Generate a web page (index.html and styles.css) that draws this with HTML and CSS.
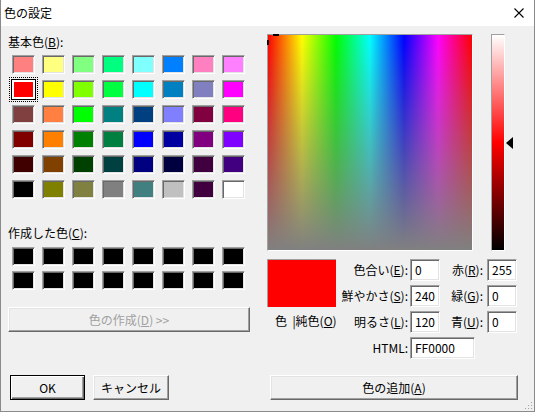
FILE: index.html
```html
<!DOCTYPE html>
<html lang="ja">
<head>
<meta charset="utf-8">
<title>色の設定</title>
<link rel="stylesheet" href="styles.css">
</head>
<body>
<div class="window">
  <div class="titlebar">
    <span class="title">色の設定</span>
    <svg class="close" width="10" height="10" viewBox="0 0 10 10"><path d="M0.5 0.5 L9.5 9.5 M9.5 0.5 L0.5 9.5" stroke="#000" stroke-width="1.1" fill="none"/></svg>
  </div>
  <div class="main">
    <div class="left">
      <div class="label">基本色(<u>B</u>):</div>
      <div class="grid basic">
        <div class="sw" style="background:#ff8080"></div>
        <div class="sw" style="background:#ffff80"></div>
        <div class="sw" style="background:#80ff80"></div>
        <div class="sw" style="background:#00ff80"></div>
        <div class="sw" style="background:#80ffff"></div>
        <div class="sw" style="background:#0080ff"></div>
        <div class="sw" style="background:#ff80c0"></div>
        <div class="sw" style="background:#ff80ff"></div>

        <div class="sw sel" style="background:#ff0000"></div>
        <div class="sw" style="background:#ffff00"></div>
        <div class="sw" style="background:#80ff00"></div>
        <div class="sw" style="background:#00ff40"></div>
        <div class="sw" style="background:#00ffff"></div>
        <div class="sw" style="background:#0080c0"></div>
        <div class="sw" style="background:#8080c0"></div>
        <div class="sw" style="background:#ff00ff"></div>

        <div class="sw" style="background:#804040"></div>
        <div class="sw" style="background:#ff8040"></div>
        <div class="sw" style="background:#00ff00"></div>
        <div class="sw" style="background:#008080"></div>
        <div class="sw" style="background:#004080"></div>
        <div class="sw" style="background:#8080ff"></div>
        <div class="sw" style="background:#800040"></div>
        <div class="sw" style="background:#ff0080"></div>

        <div class="sw" style="background:#800000"></div>
        <div class="sw" style="background:#ff8000"></div>
        <div class="sw" style="background:#008000"></div>
        <div class="sw" style="background:#008040"></div>
        <div class="sw" style="background:#0000ff"></div>
        <div class="sw" style="background:#0000a0"></div>
        <div class="sw" style="background:#800080"></div>
        <div class="sw" style="background:#8000ff"></div>

        <div class="sw" style="background:#400000"></div>
        <div class="sw" style="background:#804000"></div>
        <div class="sw" style="background:#004000"></div>
        <div class="sw" style="background:#004040"></div>
        <div class="sw" style="background:#000080"></div>
        <div class="sw" style="background:#000040"></div>
        <div class="sw" style="background:#400040"></div>
        <div class="sw" style="background:#400080"></div>

        <div class="sw" style="background:#000000"></div>
        <div class="sw" style="background:#808000"></div>
        <div class="sw" style="background:#808040"></div>
        <div class="sw" style="background:#808080"></div>
        <div class="sw" style="background:#408080"></div>
        <div class="sw" style="background:#c0c0c0"></div>
        <div class="sw" style="background:#400040"></div>
        <div class="sw" style="background:#ffffff"></div>
      </div>
      <div class="label custom-label">作成した色(<u>C</u>):</div>
      <div class="grid custom">
        <div class="sw black"></div><div class="sw black"></div><div class="sw black"></div><div class="sw black"></div>
        <div class="sw black"></div><div class="sw black"></div><div class="sw black"></div><div class="sw black"></div>
        <div class="sw black"></div><div class="sw black"></div><div class="sw black"></div><div class="sw black"></div>
        <div class="sw black"></div><div class="sw black"></div><div class="sw black"></div><div class="sw black"></div>
      </div>
      <div class="btn wide disabled">色の作成(<u>D</u>) &gt;&gt;</div>
    </div>
    <div class="right">
      <div class="picker">
        <div class="spectrum">
          <span class="cross-h"></span>
          <span class="cross-v"></span>
        </div>
        <div class="lum"></div>
        <div class="arrow"></div>
      </div>
      <div class="info">
        <div class="preview-col">
          <div class="preview"></div>
          <div class="preview-label">色&nbsp;&nbsp;|純色(<u>O</u>)</div>
        </div>
        <div class="fields">
          <div class="flabel">色合い(<u>E</u>):</div>
          <div class="field">0</div>
          <div class="flabel r">赤(<u>R</u>):</div>
          <div class="field">255</div>

          <div class="flabel">鮮やかさ(<u>S</u>):</div>
          <div class="field">240</div>
          <div class="flabel r">緑(<u>G</u>):</div>
          <div class="field">0</div>

          <div class="flabel">明るさ(<u>L</u>):</div>
          <div class="field">120</div>
          <div class="flabel r">青(<u>U</u>):</div>
          <div class="field">0</div>

          <div class="flabel">HTML:</div>
          <div class="field html">FF0000</div>
        </div>
      </div>
    </div>
  </div>
  <div class="footer">
    <div class="btn default">OK</div>
    <div class="btn cancel">キャンセル</div>
    <div class="btn add">色の追加(<u>A</u>)</div>
  </div>
  <svg class="grip" width="10" height="10" viewBox="0 0 10 10">
    <rect x="8" y="2" width="1" height="1" fill="#a0a0a0"/>
    <rect x="5" y="5" width="1" height="1" fill="#a0a0a0"/>
    <rect x="8" y="5" width="1" height="1" fill="#a0a0a0"/>
    <rect x="2" y="8" width="1" height="1" fill="#a0a0a0"/>
    <rect x="5" y="8" width="1" height="1" fill="#a0a0a0"/>
    <rect x="8" y="8" width="1" height="1" fill="#a0a0a0"/>
  </svg>
</div>
</body>
</html>
```
FILE: styles.css
```css
html, body {
  margin: 0;
  padding: 0;
}
body {
  width: 535px;
  height: 412px;
  overflow: hidden;
  background: #f0f0f0;
  font-family: "Noto Sans CJK JP", "Noto Sans", sans-serif;
  font-size: 12px;
  color: #000;
}
u {
  text-decoration: underline;
  text-underline-offset: 1px;
}

.window {
  position: relative;
  box-sizing: border-box;
  width: 535px;
  height: 412px;
  border: 1px solid #8a8a8a;
  border-top: none;
  background: #f0f0f0;
}

.titlebar {
  height: 26px;
  background: #fff;
  display: flex;
  align-items: center;
  justify-content: space-between;
  padding: 0 10px 0 3px;
}
.title {
  line-height: 16px;
}
.close {
  display: block;
}

.main {
  display: flex;
  padding-top: 8px;
}

.left {
  box-sizing: border-box;
  width: 266px;
  padding-left: 7px;
}
.label {
  height: 16px;
  line-height: 16px;
  white-space: nowrap;
}
.grid {
  display: grid;
  grid-template-columns: repeat(8, 23px);
  grid-auto-rows: 19px;
  column-gap: 7px;
  margin-left: 4px;
}
.basic {
  margin-top: 5px;
  row-gap: 6px;
}
.custom-label {
  margin-top: 26px;
}
.custom {
  margin-top: 6px;
  row-gap: 5px;
}
.sw {
  box-sizing: border-box;
  width: 23px;
  height: 19px;
  border: 1px solid;
  border-color: #a0a0a0 #fff #fff #a0a0a0;
  box-shadow: inset 1px 1px #696969, inset -1px -1px #e3e3e3;
}
.sw.black {
  background: #000;
}
.sw.sel {
  margin: -1px;
  width: 25px;
  height: 21px;
  border: 1px solid #000;
  box-shadow: inset 0 0 0 2px #fff;
  outline: 1px dotted #000;
  outline-offset: 1px;
}

.btn {
  box-sizing: border-box;
  height: 25px;
  display: flex;
  align-items: center;
  justify-content: center;
  background: #f0f0f0;
  border: 1px solid;
  border-color: #fff #696969 #696969 #fff;
  box-shadow: inset -1px -1px #a0a0a0, inset 1px 1px #e3e3e3;
  white-space: nowrap;
  line-height: 16px;
}
.btn.wide {
  margin-top: 17px;
  width: 242px;
}
.btn.disabled {
  color: #a0a0a0;
}
.btn.default {
  width: 75px;
  border: 1px solid #000;
  box-shadow: inset 1px 1px #fff, inset -1px -1px #696969, inset -2px -2px #a0a0a0;
}
.btn.cancel {
  width: 76px;
  margin-left: 8px;
}
.btn.add {
  width: 248px;
  margin-left: auto;
}

.right {
  flex: 1;
}
.picker {
  display: flex;
  align-items: center;
  height: 217px;
}
.spectrum {
  position: relative;
  box-sizing: border-box;
  width: 206px;
  height: 217px;
  border: 1px solid;
  border-color: #a0a0a0 #fff #fff #a0a0a0;
  background:
    linear-gradient(to bottom, rgba(128, 128, 128, 0), rgb(128, 128, 128)),
    linear-gradient(to right, #ff0000, #ffff00 16.67%, #00ff00 33.33%, #00ffff 50%, #0000ff 66.67%, #ff00ff 83.33%, #ff0000);
}
.cross-h {
  position: absolute;
  left: 5px;
  top: -1px;
  width: 6px;
  height: 2px;
  background: #000;
}
.cross-v {
  position: absolute;
  left: -1px;
  top: 5px;
  width: 2px;
  height: 5px;
  background: #000;
}
.lum {
  box-sizing: border-box;
  margin-left: 18px;
  width: 14px;
  height: 217px;
  border: 1px solid;
  border-color: #a0a0a0 #fff #fff #a0a0a0;
  background: linear-gradient(to bottom, #ffffff, #ff0000 50%, #000000);
}
.arrow {
  margin-left: 1px;
  width: 0;
  height: 0;
  border-top: 6px solid transparent;
  border-bottom: 6px solid transparent;
  border-right: 7px solid #000;
}

.info {
  display: flex;
  margin-top: 8px;
}
.preview-col {
  width: 69px;
}
.preview {
  box-sizing: border-box;
  height: 48px;
  background: #ff0000;
  border-top: 1px solid #a0a0a0;
  border-left: 1px solid #a0a0a0;
}
.preview-label {
  margin-top: 6px;
  padding-left: 8px;
  line-height: 16px;
  white-space: nowrap;
}
.fields {
  display: grid;
  grid-template-columns: 74px 30px 47px 30px;
  grid-auto-rows: 22px;
  row-gap: 4px;
}
.flabel {
  text-align: right;
  padding-right: 2px;
  line-height: 22px;
  white-space: nowrap;
}
.flabel.r {
  padding-right: 4px;
}
.field {
  box-sizing: border-box;
  width: 30px;
  height: 22px;
  padding-left: 4px;
  line-height: 20px;
  background: #fff;
  border: 1px solid;
  border-color: #a0a0a0 #fff #fff #a0a0a0;
  box-shadow: inset 1px 1px #696969, inset -1px -1px #e3e3e3;
  white-space: nowrap;
}
.field.html {
  grid-column: 2 / span 2;
  width: 65px;
}

.footer {
  display: flex;
  margin-top: 16px;
  padding-left: 9px;
  padding-right: 16px;
}

.grip {
  position: absolute;
  right: 1px;
  bottom: 1px;
}
```
